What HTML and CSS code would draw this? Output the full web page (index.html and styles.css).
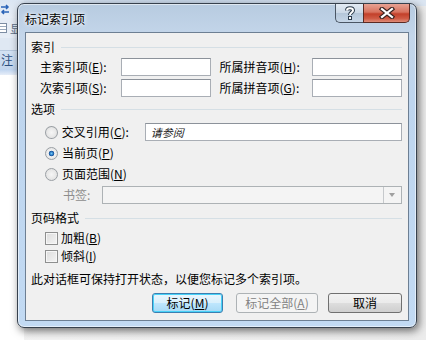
FILE: index.html
```html
<!DOCTYPE html>
<html>
  <head>
    <meta charset="UTF-8">
    <title>标记索引项</title>
    <link rel="stylesheet" href="styles.css">
  </head>
  <body>
    <div class="desktop">
      <div class="behind-left">
        <div class="bl-top">
          <svg width="10" height="12" viewBox="0 0 10 12">
            <path d="M1 3 H8 M6 1 L8 3 L6 5 M9 8 H2 M4 6 L2 8 L4 10" fill="none" stroke="#2a64b8" stroke-width="1.5"/>
          </svg>
        </div>
        <div class="bl-row"><span class="bl-icon"></span><span class="bl-txt">显</span></div>
        <div class="bl-gap"></div>
        <div class="bl-tab">注</div>
        <div class="bl-doc"></div>
      </div>
      <div class="behind-top"></div>

      <div class="window">
        <div class="titlebar">
          <span class="title">标记索引项</span>
          <div class="caption">
            <div class="cap-btn help">
              <svg width="12" height="14" viewBox="0 0 12 14">
                <path d="M3 4.5 C3 1.5 9 1.5 9 4.5 C9 6.5 6 6.5 6 9" fill="none" stroke="#2b3a4a" stroke-width="4"/>
                <path d="M3 4.5 C3 1.5 9 1.5 9 4.5 C9 6.5 6 6.5 6 9" fill="none" stroke="#ffffff" stroke-width="2"/>
                <rect x="4" y="10" width="4" height="4" fill="#2b3a4a"/>
                <rect x="5" y="11" width="2" height="2" fill="#ffffff"/>
              </svg>
            </div>
            <div class="cap-btn close">
              <svg width="16" height="12" viewBox="0 0 16 12">
                <path d="M3 2 L13 10 M13 2 L3 10" stroke="#3a2320" stroke-width="4.5" stroke-linecap="square"/>
                <path d="M3 2 L13 10 M13 2 L3 10" stroke="#ffffff" stroke-width="2.2" stroke-linecap="square"/>
              </svg>
            </div>
          </div>
        </div>

        <div class="client">
          <div class="group-head"><span>索引</span></div>
          <div class="field-row">
            <span class="lbl lbl-main">主索引项(<u>E</u>):</span>
            <span class="box box-short"></span>
            <span class="lbl lbl-py">所属拼音项(<u>H</u>):</span>
            <span class="box box-short"></span>
          </div>
          <div class="field-row">
            <span class="lbl lbl-main">次索引项(<u>S</u>):</span>
            <span class="box box-short"></span>
            <span class="lbl lbl-py">所属拼音项(<u>G</u>):</span>
            <span class="box box-short"></span>
          </div>

          <div class="group-head head-opt"><span>选项</span></div>
          <div class="opt-row first">
            <span class="radio"></span>
            <span class="lbl lbl-xref">交叉引用(<u>C</u>):</span>
            <span class="box box-long"><i>请参阅</i></span>
          </div>
          <div class="opt-row">
            <span class="radio checked"></span>
            <span class="lbl">当前页(<u>P</u>)</span>
          </div>
          <div class="opt-row">
            <span class="radio"></span>
            <span class="lbl">页面范围(<u>N</u>)</span>
          </div>
          <div class="opt-row">
            <span class="lbl lbl-bm">书签:</span>
            <span class="combo"><span class="combo-btn"></span></span>
          </div>

          <div class="group-head head-fmt"><span>页码格式</span></div>
          <div class="chk-row first">
            <span class="check"></span>
            <span class="lbl">加粗(<u>B</u>)</span>
          </div>
          <div class="chk-row">
            <span class="check"></span>
            <span class="lbl">倾斜(<u>I</u>)</span>
          </div>

          <p class="note">此对话框可保持打开状态，以便您标记多个索引项。</p>

          <div class="buttons">
            <button type="button" class="btn btn-mark default">标记(<u>M</u>)</button>
            <button type="button" class="btn btn-all" disabled>标记全部(<u>A</u>)</button>
            <button type="button" class="btn btn-cancel">取消</button>
          </div>
        </div>
      </div>
    </div>
  </body>
</html>
```

FILE: styles.css
```css
body {
  margin: 0;
  font-family: "Noto Sans CJK SC", "Noto Sans", sans-serif;
  font-size: 12px;
  color: #000000;
}
.desktop {
  position: relative;
  width: 426px;
  height: 340px;
  overflow: hidden;
  background: linear-gradient(90deg, #f4f4f4 0%, #ececec 100%);
}

/* word ribbon showing behind the dialog */
.behind-left {
  position: absolute;
  left: 0;
  top: 0;
  width: 24px;
  height: 340px;
  background: #ffffff;
}
.bl-top {
  height: 18px;
  padding-top: 2px;
  box-sizing: border-box;
  background: linear-gradient(#dbe6f3, #e9eff7);
}
.bl-row {
  height: 20px;
  background: #e6edf6;
  display: flex;
  align-items: center;
  gap: 3px;
  color: #5a6e86;
}
.bl-icon {
  width: 7px;
  height: 10px;
  box-sizing: border-box;
  border: 1px solid #7c8da3;
  border-left: none;
  background: repeating-linear-gradient(#ffffff 0 2px, #9aaabd 2px 3px);
}
.bl-txt {
  font-size: 12px;
}
.bl-gap {
  height: 12px;
  background: #dfe8f3;
  border-bottom: 1px solid #b6c8de;
}
.bl-tab {
  height: 18px;
  line-height: 18px;
  background: linear-gradient(#d3e2f3, #c3d6ee);
  color: #2b4f7f;
  padding-left: 1px;
}
.bl-doc {
  height: 6px;
  background: linear-gradient(#bcd3ef, #e7eef8);
}
.behind-top {
  position: absolute;
  left: 24px;
  top: 0;
  width: 402px;
  height: 6px;
  background: linear-gradient(90deg, #d7e3f1 0%, #c9d8ea 40%, #dce6f2 100%);
}

/* dialog window */
.window {
  position: absolute;
  left: 17px;
  top: 3px;
  width: 400px;
  height: 325px;
  box-sizing: border-box;
  border: 1px solid #37414d;
  border-radius: 7px;
  background: linear-gradient(180deg, #b7cbe0 0%, #c4d6ea 10%, #bed5ee 30%, #c2daf3 100%);
  box-shadow: 2px 3px 9px rgba(0, 0, 0, 0.55), inset 0 0 0 1px rgba(255, 255, 255, 0.55);
  padding: 0 7px 6px 7px;
  display: flex;
  flex-direction: column;
}
.titlebar {
  height: 28px;
  display: flex;
  justify-content: space-between;
  align-items: flex-start;
}
.title {
  margin-top: 7px;
  font-size: 12px;
  line-height: 16px;
  color: #000000;
  text-shadow: 0 0 6px #ffffff, 0 0 3px #ffffff;
}
.caption {
  display: flex;
  margin-right: -1px;
}
.cap-btn {
  height: 19px;
  box-sizing: border-box;
  display: flex;
  align-items: center;
  justify-content: center;
  border: 1px solid #4a5664;
  border-top: none;
}
.help {
  width: 28px;
  border-radius: 0 0 0 5px;
  border-right: none;
  background: linear-gradient(#e3ebf4 0%, #cbd8e6 48%, #b4c6d9 52%, #c6d6e7 100%);
}
.close {
  width: 47px;
  border-radius: 0 0 5px 0;
  border-color: #5b2a23;
  background: linear-gradient(#e8a293 0%, #d8735f 45%, #c3402a 55%, #cf5a44 80%, #df8c78 100%);
}

.client {
  flex: 1;
  background: #f0f0f0;
  border: 1px solid #6d7f93;
  padding: 6px 6px 0 5px;
  display: flex;
  flex-direction: column;
}

.group-head {
  height: 16px;
  display: flex;
  align-items: center;
  gap: 6px;
  line-height: 16px;
}
.group-head::after {
  content: "";
  flex: 1;
  height: 0;
  border-top: 1px solid #d5dfe5;
}
.head-opt {
  margin-top: 4px;
}
.head-fmt {
  margin-top: 6px;
}

.lbl {
  line-height: 16px;
  white-space: nowrap;
}
.lbl u {
  text-decoration: underline;
}

.field-row {
  display: flex;
  align-items: center;
  height: 18px;
  margin-top: 3px;
  padding-left: 9px;
}
.lbl-main {
  width: 81px;
}
.lbl-py {
  width: 93px;
  margin-left: 9px;
}
.box {
  height: 18px;
  box-sizing: border-box;
  background: #ffffff;
  border: 1px solid #a9aeb5;
  border-top-color: #8c929a;
}
.box-short {
  width: 90px;
}
.box-long {
  width: 261px;
  margin-left: auto;
  padding-left: 5px;
  font-size: 11px;
  line-height: 16px;
  color: #1a1a1a;
}

.opt-row {
  display: flex;
  align-items: center;
  height: 18px;
  margin-top: 3px;
  padding-left: 14px;
}
.opt-row.first {
  margin-top: 6px;
}
.radio {
  width: 13px;
  height: 13px;
  box-sizing: border-box;
  border-radius: 50%;
  border: 1px solid #9a9fa4;
  background: radial-gradient(circle at 50% 50%, #f6f6f6 0%, #dcdcdc 100%);
  margin-right: 4px;
}
.radio.checked {
  background: radial-gradient(circle at 50% 50%, #72c6f3 0%, #2a7ac6 22%, #1a4f92 32%, #f1f1f1 40%, #dcdcdc 100%);
}
.lbl-xref {
  width: 84px;
}
.lbl-bm {
  width: 39px;
  margin-left: 18px;
  color: #8d8d8d;
}
.combo {
  flex: 1;
  height: 18px;
  box-sizing: border-box;
  border: 1px solid #adb2b5;
  background: #f4f4f4;
  display: flex;
  justify-content: flex-end;
}
.combo-btn {
  width: 17px;
  border-left: 1px solid #c6c9cc;
  background: #f4f4f4;
  position: relative;
}
.combo-btn::after {
  content: "";
  position: absolute;
  left: 5px;
  top: 6px;
  border-left: 3.5px solid transparent;
  border-right: 3.5px solid transparent;
  border-top: 4px solid #a0a0a0;
}

.chk-row {
  display: flex;
  align-items: center;
  height: 18px;
  padding-left: 14px;
}
.chk-row.first {
  margin-top: 3px;
}
.check {
  width: 13px;
  height: 13px;
  box-sizing: border-box;
  border: 1px solid #8e8f8f;
  background: linear-gradient(135deg, #dcdcdc 0%, #f4f4f4 100%);
  box-shadow: inset 0 0 0 1px #f6f6f6;
  margin-right: 3px;
}

.note {
  margin: 6px 0 0 0;
  line-height: 16px;
  white-space: nowrap;
}

.buttons {
  display: flex;
  margin-top: 6px;
  padding-left: 121px;
}
.btn {
  height: 20px;
  box-sizing: border-box;
  font-family: inherit;
  font-size: 12px;
  line-height: 16px;
  padding: 0;
  border: 1px solid #707070;
  border-radius: 3px;
  background: linear-gradient(#f2f2f2 0%, #ebebeb 48%, #dddddd 52%, #cfcfcf 100%);
  color: #000000;
}
.btn u {
  text-decoration: underline;
}
.btn-mark {
  width: 71px;
}
.btn.default {
  border-color: #3c7fb1;
  box-shadow: inset 0 0 0 1px #48d2f8;
  background: linear-gradient(#eaf6fd 0%, #d9f0fc 48%, #bee6fd 52%, #a7d9f5 100%);
}
.btn-all {
  width: 82px;
  margin-left: 13px;
  border-color: #adb2b5;
  background: #f4f4f4;
  color: #838383;
}
.btn-cancel {
  width: 74px;
  margin-left: 10px;
}
```
